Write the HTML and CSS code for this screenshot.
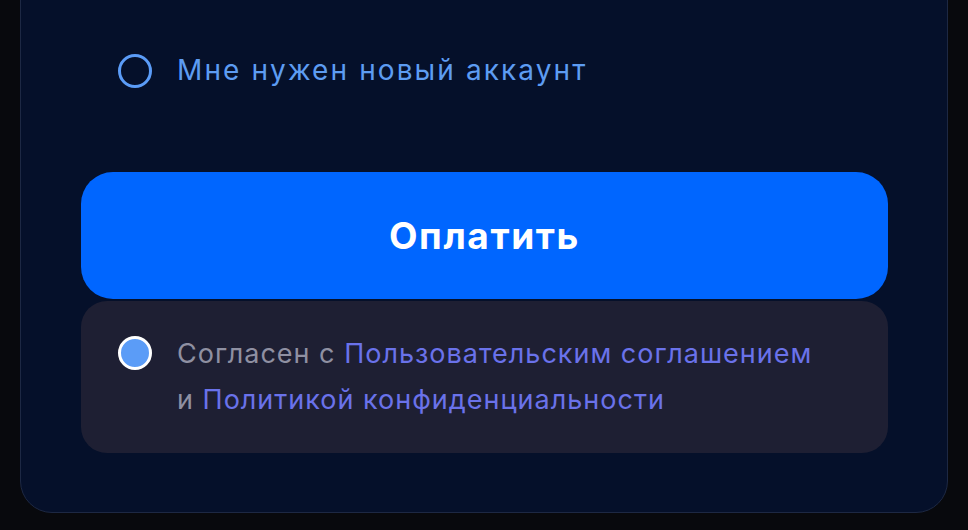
FILE: index.html
```html
<!DOCTYPE html>
<html lang="ru">
<head>
<meta charset="utf-8">
<link rel="stylesheet" href="styles.css">
</head>
<body>
<div class="card">
  <label class="option">
    <span class="radio radio-empty"></span>
    <span class="option-text">Мне нужен новый аккаунт</span>
  </label>
  <button class="pay">Оплатить</button>
  <div class="agree">
    <span class="radio radio-filled"></span>
    <p class="agree-text">Согласен с <a class="link">Пользовательским соглашением</a><br>и <a class="link">Политикой конфиденциальности</a></p>
  </div>
</div>
</body>
</html>
```
FILE: styles.css
```css
html, body {
  margin: 0;
  padding: 0;
  background: #08090d;
  height: 530px;
  overflow: hidden;
  font-family: Inter, "Noto Sans", sans-serif;
}
.card {
  box-sizing: border-box;
  margin: -60px 20px 0 20px;
  height: 573px;
  background: #05102a;
  border: 1.5px solid #1d2843;
  border-radius: 32px;
  padding: 113px 59px 0 60px;
  display: flex;
  flex-direction: column;
}
.option {
  display: flex;
  align-items: center;
  height: 34px;
  gap: 25px;
  padding-left: 37px;
}
.radio {
  box-sizing: border-box;
  width: 34px;
  height: 34px;
  border-radius: 50%;
  flex: none;
}
.radio-empty {
  border: 3px solid #5b9cf7;
}
.radio-filled {
  background: #5b9cf7;
  border: 3.5px solid #ffffff;
  margin-top: 35px;
}
.option-text {
  color: #5d9cf2;
  font-size: 28px;
  letter-spacing: 2.1px;
  position: relative;
  top: -1px;
}
.pay {
  margin-top: 84px;
  height: 127px;
  border: none;
  border-radius: 32px;
  background: #0066ff;
  color: #ffffff;
  font-family: Inter, "Noto Sans", sans-serif;
  font-weight: 700;
  font-size: 37px;
  letter-spacing: 1.6px;
  padding: 0;
}
.agree {
  margin-top: 2px;
  background: #1e1f33;
  border-radius: 26px;
  display: flex;
  align-items: flex-start;
  gap: 25px;
  padding: 0 30px 0 37px;
  height: 152px;
  box-sizing: border-box;
}
.agree-text {
  margin: 30px 0 0 0;
  color: #8f90a2;
  font-size: 27px;
  letter-spacing: 1px;
  line-height: 46px;
}
.link {
  color: #6a72ea;
}
```
